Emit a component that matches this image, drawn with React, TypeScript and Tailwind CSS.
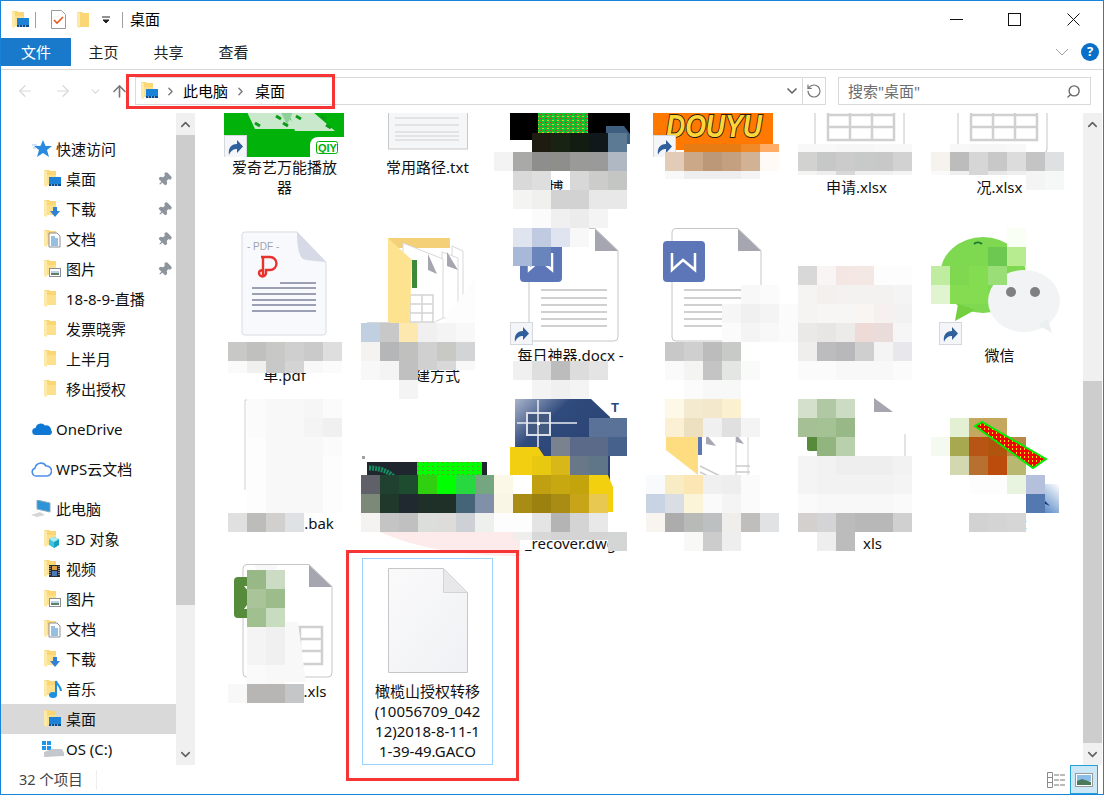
import type { ReactNode } from 'react';
import { ArrowLeft, ArrowRight, ArrowUp, ChevronDown, ChevronRight, ChevronUp, Pin, RotateCw, Search } from 'lucide-react';

type Overlay = 'desktop' | 'download' | 'doc' | 'pic' | 'cube' | 'video' | 'music' | 'none';

function SmallFolder({ overlay = 'none' }: { overlay?: Overlay }) {
  return (
    <svg width="18" height="20" viewBox="0 0 18 20" className="shrink-0">
      <path d="M0 1h5l1 1h6v14H0z" fill="#fbd675" />
      <path d="M0 1l3 1v16l-3-1z" fill="#fde9a8" />
      <path d="M3 6h9v10H3z" fill="#fde08c" />
      {overlay === 'desktop' && (
        <g>
          <rect x="5" y="8" width="12" height="9" fill="#1b82d8" />
          <rect x="5" y="15" width="12" height="2" fill="#0a4c8c" />
          <path d="M7 16h1M10 16h1M13 16h1" stroke="#fff" strokeWidth="1" />
        </g>
      )}
      {overlay === 'download' && <path d="M9 8h4v4h3l-5 6-5-6h3z" fill="#2f80d6" />}
      {overlay === 'doc' && (
        <g>
          <path d="M5 4h8l3 3v11H5z" fill="#fff" stroke="#8a8f96" />
          <path d="M7 8h4M7 10h7M7 12h7M7 14h7M7 16h7" stroke="#2f7fc4" strokeWidth="1" />
        </g>
      )}
      {overlay === 'pic' && (
        <g>
          <rect x="5.5" y="9.5" width="11" height="8" fill="#fff" stroke="#8a8f96" />
          <path d="M7 12h8v2H7z" fill="#b9d4ea" />
          <path d="M7 14h8v2H7z" fill="#5f7f62" />
        </g>
      )}
      {overlay === 'cube' && (
        <g>
          <path d="M10 8l5 2v6l-5 3-5-3v-6z" fill="#3fc4de" />
          <path d="M10 13l5-3v6l-5 3z" fill="#18a0c0" />
          <path d="M5 10l5 3 5-3-5-2z" fill="#a8ecf4" />
        </g>
      )}
      {overlay === 'video' && (
        <g>
          <rect x="5" y="6" width="11" height="12" fill="#2b2b2b" />
          <rect x="8" y="7" width="5" height="4" fill="#e0a040" />
          <rect x="8" y="12" width="5" height="5" fill="#4a78b8" />
          <path d="M6 7v10M15 7v10" stroke="#ddd" strokeWidth="1" strokeDasharray="1 1" />
        </g>
      )}
      {overlay === 'music' && (
        <g>
          <ellipse cx="9" cy="16" rx="4" ry="3" fill="#1e8ee0" />
          <path d="M12 16V2c1 4 5 5 5 10" stroke="#1e8ee0" strokeWidth="2" fill="none" />
        </g>
      )}
    </svg>
  );
}

function Shortcut({ x, y }: { x: number; y: number }) {
  return (
    <g transform={`translate(${x} ${y})`}>
      <rect x="0.5" y="0.5" width="22" height="22" fill="#f3f5f8" stroke="#d4d7dc" />
      <path d="M5 20c-1-7 2-11 8-11V5l6 6.5-6 6.5v-4c-3 0-6 1-8 6z" fill="#2f5f9c" />
    </g>
  );
}

function BaseDoc({ children }: { children?: ReactNode }) {
  return (
    <>
      <path d="M28 6.5h62l23 22V115a4 4 0 0 1-4 4H28a4 4 0 0 1-4-4V10a4 4 0 0 1 4-3.5z" fill="#fff" stroke="#c6c6c6" />
      <path d="M90 7l23 22H90z" fill="#a5a6b0" />
      {children}
    </>
  );
}

function WordIcon({ shortcut }: { shortcut?: boolean }) {
  return (
    <IconBox>
      <BaseDoc>
        <path d="M36 68h66M36 76h66M36 83h66M36 90h66M36 97h66M36 104h66" stroke="#d0d0d0" strokeWidth="2" />
        <rect x="15" y="19" width="42" height="41" rx="4" fill="#5c76b8" />
        <path d="M24 31v17l11-10 12 10V31" stroke="#fff" strokeWidth="2.5" fill="none" />
      </BaseDoc>
      {shortcut && <Shortcut x={5} y={100} />}
    </IconBox>
  );
}

function ExcelIcon({ badge }: { badge?: boolean }) {
  return (
    <IconBox>
      <BaseDoc>
        <path d="M37 69h66v37H37zM37 81h66M37 93h66M59 69v37M81 69v37" stroke="#d0d0d0" strokeWidth="2.5" fill="none" />
        {badge && (
          <g>
            <rect x="15" y="19" width="42" height="41" rx="4" fill="#558b3b" />
            <path d="M25 28l9 11-9 12h6l7-9 7 9h5l-9-12 9-11h-6l-6 8-6-8z" fill="#fff" />
          </g>
        )}
      </BaseDoc>
    </IconBox>
  );
}

function IconBox({ children }: { children: ReactNode }) {
  return (
    <svg width="131" height="123" viewBox="0 0 131 123" className="block">
      {children}
    </svg>
  );
}

function IqiyiIcon() {
  return (
    <IconBox>
      <rect x="5" y="3" width="120" height="120" fill="#00b20a" />
      <path d="M28 78h38l12 17H36z" fill="#c9e8cc" />
      <path d="M69 78h25l22 19H76z" fill="#c9e8cc" />
      <path d="M62 78h12l-6 13z" fill="#8fd09a" />
      <path d="M36 89l5 3M57 82l5 3M64 89l5 3M77 82l5 3M102 82l5 3M107 91l5 3" stroke="#0a9a14" strokeWidth="3" />
      <path d="M125 103h-26a8 8 0 0 0-8 8v12h34z" fill="#fff" />
      <rect x="97.500" y="107.500" width="21" height="12" rx="2" fill="none" stroke="#00b20a" />
      <text x="99" y="118" fontSize="11" fontWeight="700" fill="#00b20a" fontFamily="Liberation Sans">QIY</text>
      <Shortcut x={5} y={101} />
    </IconBox>
  );
}

function TxtIcon() {
  return (
    <IconBox>
      <rect x="26.5" y="40" width="79" height="75" fill="#f5f6f8" stroke="#c8c8c8" />
      <path d="M33 84h64M33 91h64M33 98h64M33 102h64M33 106h64" stroke="#cfd0d2" strokeWidth="1" />
    </IconBox>
  );
}

function NoiseIcon() {
  return (
    <IconBox>
      <defs>
        <pattern id="noise" width="5" height="4" patternUnits="userSpaceOnUse">
          <rect width="5" height="4" fill="#10c030" />
          <rect width="2" height="1" fill="#e03020" />
          <rect x="2" y="2" width="2" height="1" fill="#e8c020" />
        </pattern>
      </defs>
      <rect x="5" y="40" width="120" height="66" fill="#000" />
      <rect x="33" y="60" width="50" height="43" fill="url(#noise)" />
      <path d="M101 92h18l6 8v10h-24z" fill="#3f5f80" />
    </IconBox>
  );
}

function DouyuIcon() {
  return (
    <IconBox>
      <path d="M5 40h120v70a12 8 0 0 1-10 6H5z" fill="#ff7800" />
      <text x="18" y="103" fontSize="32" fontWeight="700" fontStyle="italic" fill="#ffd53a" stroke="#2a1e10" strokeWidth="2" fontFamily="Liberation Sans" paintOrder="stroke" textLength="96" lengthAdjust="spacingAndGlyphs">DOUYU</text>
      <Shortcut x={5} y={101} />
    </IconBox>
  );
}

function PdfIcon() {
  return (
    <IconBox>
      <path d="M26 10h52l29 30v70a3 3 0 0 1-3 3H26a3 3 0 0 1-3-3V13a3 3 0 0 1 3-3z" fill="#f8f9fc" stroke="#d8dae0" />
      <path d="M78 10c0 14 2 24 6 27 6 2 16 2 23 3z" fill="#d6d9e6" />
      <text x="28" y="28" fontSize="10" fill="#a0a4b0" fontFamily="Liberation Sans">- PDF -</text>
      <path d="M42 35h9a6.500 6.500 0 0 1 0 13h-4v3a3.500 3.500 0 0 1-7 0c0-2 2-3 5-3M44 35v20" stroke="#e8322e" strokeWidth="2.4" fill="none" />
      <path d="M61 61h36" stroke="#9ba0b4" strokeWidth="2" />
      <path d="M33 66h64M33 72h64M33 78h64M33 83h64M33 89h64" stroke="#9ba0b4" strokeWidth="2" />
    </IconBox>
  );
}

function FolderIcon({ shortcut }: { shortcut?: boolean }) {
  return (
    <IconBox>
      <path d="M26 16h62v10H26z" fill="#f4d078" />
      <path d="M90 24l11 5v61H90z" fill="#fff" stroke="#d8d8d8" />
      <path d="M80 30l16 6v60H80z" fill="#fff" stroke="#d8d8d8" />
      <path d="M85 30l11 18-11-4z" fill="#a5a6b0" />
      <path d="M41 21l40 16v59l-40 20z" fill="#fff" stroke="#d8d8d8" />
      <path d="M66 32l9 20-9-4z" fill="#a5a6b0" />
      <path d="M50 38h5v28h-5z" fill="#3e8a38" />
      <path d="M48 73h23v27H48zM48 82h23M48 91h23M60 73v27" stroke="#d4d4d4" strokeWidth="1.5" fill="none" />
      <path d="M26 16l24 22-3 77-21-15z" fill="#fde390" />
      {shortcut && <Shortcut x={5} y={100} />}
    </IconBox>
  );
}

function PaperIcon() {
  return (
    <IconBox>
      <rect x="9" y="44" width="108" height="72" fill="#fff" />
      <path d="M115 50v66H12" stroke="#a8a8a8" strokeWidth="2" fill="none" />
      <path d="M16 52h34M16 56h26M68 50h36M68 54h30" stroke="#c8b8a8" strokeWidth="1" />
    </IconBox>
  );
}

function WechatIcon() {
  return (
    <IconBox>
      <ellipse cx="49" cy="53" rx="43" ry="38" fill="#7ed850" />
      <path d="M24 82l-3 17 20-11z" fill="#72d03e" />
      <path d="M40 22a6 6 0 0 1 8 0" stroke="#1a7a30" strokeWidth="2" fill="none" />
      <ellipse cx="90" cy="79" rx="36" ry="31" fill="#f1f3f4" />
      <path d="M104 103l14 8-4-14z" fill="#ecefef" />
      <circle cx="77" cy="70" r="5" fill="#808080" />
      <circle cx="101" cy="70" r="5" fill="#808080" />
      <Shortcut x={5} y={100} />
    </IconBox>
  );
}

function PaleFileIcon() {
  return (
    <IconBox>
      <path d="M26 10h60M26 10v90M104 60v55H70" stroke="#d0d0d0" fill="none" />
    </IconBox>
  );
}

function DarkThumbIcon() {
  return (
    <IconBox>
      <defs>
        <pattern id="noise2" width="5" height="4" patternUnits="userSpaceOnUse">
          <rect width="5" height="4" fill="#00ff00" />
          <rect width="2" height="1" fill="#60a030" />
        </pattern>
      </defs>
      <rect x="5" y="72" width="120" height="46" fill="#20262e" />
      <rect x="55" y="72" width="65" height="30" fill="url(#noise2)" />
      <path d="M7 78c15 0 26 6 30 18" stroke="#129060" strokeWidth="5" strokeDasharray="2 1" fill="none" />
      <path d="M0 66h3v3H0z" fill="#a0a0a0" />
    </IconBox>
  );
}

function CadIcon() {
  return (
    <IconBox>
      <defs>
        <linearGradient id="cad" x1="0" y1="0" x2="1" y2="1">
          <stop offset="0" stopColor="#aab4cc" />
          <stop offset="0.3" stopColor="#2f4a7c" />
          <stop offset="1" stopColor="#26406e" />
        </linearGradient>
      </defs>
      <path d="M10 9h76l19 18v70H10z" fill="url(#cad)" />
      <rect x="22" y="23" width="23" height="22" fill="#44597f" stroke="#d8dde8" strokeWidth="2" />
      <path d="M12 33h60M33 10v47" stroke="#e8ebf0" strokeWidth="1.5" />
      <rect x="32" y="32" width="3" height="3" fill="#fff" />
      <text x="106" y="22" fontSize="13" fontWeight="700" fill="#1f4a80" fontFamily="Liberation Sans">T</text>
      <path d="M5 57h28l8 12h55l12 28v25H5z" fill="#f2cf10" />
      <text x="12" y="104" fontSize="20" fontWeight="700" fill="#111" fontFamily="Liberation Sans">DW</text>
    </IconBox>
  );
}

function FolderThumbIcon() {
  return (
    <IconBox>
      <path d="M49 40h55v60H49z" fill="#fff" />
      <path d="M88 42v56M100 44v52" stroke="#d0d0d0" />
      <path d="M52 76l24 12M52 82l24 12M88 76h14M88 82h14" stroke="#ccc" strokeWidth="1.5" />
      <path d="M58 44l10 12-10-2zM88 44l8 10-8-2z" fill="#a8a8b4" />
      <rect x="50" y="45" width="4" height="20" fill="#5c76b8" />
      <path d="M18 45h32v40L18 60z" fill="#fedc80" />
    </IconBox>
  );
}

function GreenExcelThumbIcon() {
  return (
    <IconBox>
      <path d="M83 8l19 14H83z" fill="#a5a6b0" />
      <path d="M114 44v30" stroke="#c8c8c8" />
      <rect x="16" y="45" width="14" height="16" rx="2" fill="#558b3b" />
    </IconBox>
  );
}

function RevitIcon() {
  return (
    <IconBox>
      <defs>
        <linearGradient id="rvt" x1="1" y1="0" x2="0" y2="1">
          <stop offset="0" stopColor="#ffffff" />
          <stop offset="1" stopColor="#1b5cb0" />
        </linearGradient>
      </defs>
      <rect x="92" y="94" width="33" height="29" fill="url(#rvt)" />
      <path d="M104 98l4 2v8l8 8-9-4-8 6 5-10z" fill="#12337c" />
    </IconBox>
  );
}

function GenericIcon() {
  return (
    <IconBox>
      <defs>
        <linearGradient id="gdoc" x1="0" y1="0" x2="1" y2="1">
          <stop offset="0" stopColor="#fafafb" />
          <stop offset="1" stopColor="#f0f1f4" />
        </linearGradient>
      </defs>
      <path d="M26.500 10.500h55l24 24v80h-79z" fill="url(#gdoc)" stroke="#c6c6c6" />
      <path d="M81.500 10.500l24 24h-24z" fill="#e8e8ea" stroke="#d4d4d4" />
    </IconBox>
  );
}

type Tile = { icon: ReactNode; lines: ReactNode[]; selected?: boolean };

const gap = (cls: string) => <span className={`inline-block ${cls}`} />;

const tiles: Tile[] = [
  { icon: <IqiyiIcon />, lines: ['爱奇艺万能播放', '器'] },
  { icon: <TxtIcon />, lines: ['常用路径.txt'] },
  { icon: <NoiseIcon />, lines: ['', <span className="mr-[29px]">博</span>, ''] },
  { icon: <DouyuIcon />, lines: [''] },
  { icon: <ExcelIcon />, lines: ['', '申请.xlsx'] },
  { icon: <ExcelIcon />, lines: ['', '况.xlsx'] },

  { icon: <PdfIcon />, lines: ['', '单.pdf'] },
  { icon: <FolderIcon shortcut />, lines: ['', <>{gap('w-[20px]')}建方式</>] },
  { icon: <WordIcon shortcut />, lines: ['每日神器.docx -', ''] },
  { icon: <WordIcon />, lines: [''] },
  { icon: <PaperIcon />, lines: [''] },
  { icon: <WechatIcon />, lines: ['微信'] },

  { icon: <PaleFileIcon />, lines: [<>{gap('w-[69px]')}.bak</>] },
  { icon: <DarkThumbIcon />, lines: [''] },
  { icon: <CadIcon />, lines: ['', '_recover.dwg'] },
  { icon: <FolderThumbIcon />, lines: [''] },
  { icon: <GreenExcelThumbIcon />, lines: ['', <>{gap('w-[32px]')}xls</>] },
  { icon: <RevitIcon />, lines: [<>{gap('w-[41px]')}vt</>] },

  { icon: <ExcelIcon badge />, lines: [<>{gap('w-[61px]')}.xls</>] },
  { icon: <GenericIcon />, lines: ['橄榄山授权转移', '(10056709_042', '12)2018-8-11-1', '1-39-49.GACO'], selected: true },
];

// mosaic cells that sit over the file icons: [row, first column, colours, height]
const mosaic: [number, number, string, number?][] = [
  [0, 16, '1e1c10 1a2214 121c10 10181c 5c7a94'],
  [1, 14, 'f3f3f3 a9a9a7 8e8e8c 8e8e8a 9a9a98 9a9a9a b0b8c4'],
  [2, 15, 'd9d9d9 dedede - d8d8d8 ccccca c4c6c4'],
  [3, 15, 'f4f4f2 f0f0ee d2d2d2 d2d2d2 e8e8e8 e8e8e8'],
  [4, 16, 'fbfbfb f0f0f0 ececec f4f4f4'],
  [0.58, 24, 'e87c14 e87c14 e87c14 f08a28 ffac66', 8],
  [1, 23, 'e2ccb8 cba888 bd9878 c4a080 d2b294 fffaf5'],
  [2, 23, 'f8f8f8 eeeeee eeeeee eeeeee f4f4f4', 8],
  [0.58, 30, 'f8f8f8 f8f8f8 f6f6f6 f6f6f6 f8f8f8 f8f8f8', 8],
  [1, 30, 'd2d2d0 c6c8c8 cbcbcb c8caca c8c8c8 d2d2d2'],
  [2, 30, 'f4f4f4 eeeeee d8d8d8 f0f0f0 f0f0f0 f4f4f4', 4],
  [0.58, 38, 'f8f8f8 f6f6f6 f6f6f6 f8f8f8', 8],
  [1, 37, 'f6f2ee bcbcbc d6d6d6 c8c8c8 dcdcdc c4c4c4 dfe0e2'],
  [2, 37, 'fafafa efefef d6d6d6 e8e8e8 eeeeee', 4],
  [2, 42, 'f4f4f4 f6f8f8'],

  [5, 15, 'e0e4ee c0cae0 e0e4f0 f8f8f8'],
  [6, 15, 'a8b8d8 6a84bc'],
  [8, 27, 'f8f8f8 fbfbfb'],
  [9, 26, 'f6f6f6 f0f0f0 f4f4f4 fbfbfb'],
  [10, 26, 'fbfbfb f4f4f4 f8f8f8 fbfbfb'],
  [7, 30, 'd8d8d8 f8f5f4 f4e6e2 f4e8e4 fdfdfd fdfdfd'],
  [8, 30, 'f6f4f2 f4f0ee f4f2f0 f4f2f0 f4f2f0 f4f4f4'],
  [9, 30, 'f6f4f2 f8f6f4 f8f6f4 f8f5f2 f6f0ee f2f2f2'],
  [10, 30, 'ebe9e7 e8e6e4 ecebea eedad6 eadcda f6f6f6'],
  [11, 30, 'f0eeec bcbcbe b8b8ba cfcfcf f4f4f4 e8e8ec'],
  [12, 30, 'fbfbfb fbfbfb f8f8f8 f8f8f8 f8f8f8 fbfbfb'],
  [5, 41, 'fafff5'],
  [6, 40, '6cc850 b8ec90'],
  [7, 37, 'c0eca0 80d850 84dc50 9ade78'],
  [8, 37, 'e0f4d0 86dc50 84dc50'],
  [11, 0, 'c8c8c6 c0c0be c8c8c4 cfcfcf cacaca dedede'],
  [12, 0, 'fafafa f0f0ee c8c8c8 d4d4d4 f8f8f8 fbfbfb', 12],
  [10, 7, 'c0d0e0 c8c8c8 fde8b0 f0f0f0 f4f4f4 f8f8f8'],
  [11, 7, 'f4f3f2 b4b6b8 c0c0be d0d0d0 c8c8c4 d2d4d6'],
  [12, 7, 'f8f8f8 f4f4f4 c0c0c0'],
  [12, 10, 'd0d0d0 d8d8d8 f8f8f8', 9],
  [13, 9, 'f4f4f4'],
  [12, 15, 'f0f0f0 dedede bcbcbc dcdcdc e4e4e4'],
  [13, 16, 'f4f4f4 f0f0f0 f4f4f4'],
  [11, 23, 'c8c8c8 cfcfcf bcbcbc c8cac8'],
  [12, 23, 'fafafa f4f4f2 c4c4c4 e4e6e4 fafafa'],
  [13, 24, 'fbfbfb f8f8f8 f8f8f8'],

  [14, 1, 'fbfbfb f8f8f8 f8f8f8 f6f6f6 fbfbfb'],
  [15, 1, 'fbfbfb f8f8f8 f8f8f8 f4f4f4 f0f0f0'],
  [16, 1, 'fdfdfd f8f8f8 f8f8f8 f8f8f8 fbfbfb'],
  [17, 1, 'fdfdfd f8f8f8 f8f8f8 f8f8f8 fdfdfd'],
  [18, 1, 'fdfdfd f8f8f8 f8f8f8 f8f8f8 fdfdfd'],
  [19, 1, 'fdfdfd f8f8f8 f8f8f8 f8f8f8 fdfdfd'],
  [20, 0, 'e0e0e0 bcbcba d2d0ce dee2e4'],
  [15, 19, '5a7298 5a7298'],
  [16, 17, '7a8290 5a6a88 5a6a88 46628c'],
  [17, 16, 'e8c810 d8b818 687888 5f7688'],
  [18, 7, '606068 204030 1e4c2e 30d010 00ff00 28d840 74a680 fbf8e8 fffffe c0a010 c8a810 c4a40c f2d010'],
  [19, 7, '7c8878 20382c 202830 1f3028 1f3029 456478 8090a8 faf6e6 a88c14 9c8010 a88c14 c8a418 e8c850'],
  [20, 7, 'f4f3f2 c4c4c4 c0c0c0 dcdedc dedcd8 cdd0d4 eef0ee fdfdfd fdfdfd e4e4e4 b4b4b4 d4d4d4 e8e8e8'],
  [21, 15, 'f0eeec d8d8d8 d4d4d4 d4d4d4 d4d4d4', 8],
  [21, 20, 'd4d6d6'],
  [14, 23, 'fef8e8 f4ead0 f4e8cc fbf0d0'],
  [15, 23, 'fcf0d4 ece0c0 f0f0f0 e0e0e0 f4f4f4'],
  [18, 22, 'f8fafc f8ecc4 fbe6b4 f0f0f0 eeeeee fbfbfb'],
  [19, 22, 'c8d4e4 d8dee4 fcf4d8 fafafa f4f4f4 fbfbfb'],
  [20, 22, 'f8f4f0 acacac b8bab8 bcc0c0 f0eeea c0bebc e0e2e4'],
  [21, 24, 'f8f8f6 cccccc eeeeee'],
  [14, 30, 'd4e0cc b0c8a4 ccdcc4'],
  [15, 30, 'a4c094 a4c294 98b888'],
  [16, 31, '92b47e b8d0ac'],
  [17, 30, 'f4f4f4 f2f2f2 eeeeee eeeeee eeeeee f2f2f2'],
  [18, 30, 'f4f4f4 f2f2f2 f2f2f2 f2f2f2 f2f2f2 f4f4f4'],
  [19, 30, 'fafafa f8f8f8 f8f8f8 f8f8f8 f8f8f8 fafafa'],
  [20, 30, 'd4d0ce d4d4d6 bcbcbc b8b8b8 b8b8b8 d0d0d0'],
  [21, 31, 'eeeeee bcbcbc'],
  [15, 38, 'e4f0d4 c4a860 c4a860'],
  [16, 37, 'f4faf0 a8a850 b85414 b0540e b88848'],
  [17, 38, 'd4d8b0 b87030 bc4c0c b8b870'],
  [18, 39, 'fdfdfd fdfdfd e8f4e0 b4c0dc'],
  [19, 42, '5478b0'],
  [20, 39, 'd2d2d2 d4d4d4 d6d6d6'],

  [23, 1, '98b888 ccdcc4'],
  [24, 1, 'a8c498 9cbc8c'],
  [25, 1, 'a0c090 c8dcc0'],
  [26, 1, 'f4f4f4 f0f0f0'],
  [27, 1, 'f4f4f4 f0f0f0'],
  [28, 1, 'fafafa f8f8f8'],
  [29, 0, 'f8f8f8 b8b6b4 b8b6b4 c4c6c8'],
];

function MosaicLayer() {
  return (
    <svg
      width="888"
      height="652"
      viewBox="195 113 888 652"
      shapeRendering="crispEdges"
      className="absolute left-0 top-0 pointer-events-none"
    >
      <defs>
        <pattern id="band" width="4" height="4" patternUnits="userSpaceOnUse">
          <rect width="4" height="4" fill="#f00000" />
          <rect width="1" height="2" fill="#ffe000" />
        </pattern>
      </defs>
      <path d="M475 278v67h-49z" fill="#fdfdfd" shapeRendering="auto" />
      <path d="M380 532c40 18 90 24 140 24v-24z" fill="#fdeaea" shapeRendering="auto" />
      <path d="M255 565h22l-4 20H258zM255 622l-9 60h60l-8-60z" fill="#f8f8f8" shapeRendering="auto" />
      {mosaic.flatMap(([row, col, colors, h]) =>
        colors.split(' ').map((c, i) =>
          c === '-' ? null : (
            <rect key={`${row}-${col}-${i}`} x={228 + 19 * (col + i)} y={133 + 19 * row} width="19" height={h ?? 19} fill={`#${c}`} />
          ),
        ),
      )}
      <path d="M975 426l7-4 64 37-13 9z" fill="url(#band)" stroke="#00f000" strokeWidth="2" shapeRendering="auto" />
    </svg>
  );
}

function NavRow({ icon, label, pin, depth = 1, active }: { icon: ReactNode; label: string; pin?: boolean; depth?: 0 | 1; active?: boolean }) {
  return (
    <div className={`h-[30px] flex items-center shrink-0 ${depth === 1 ? 'pl-[43px]' : 'pl-[31px]'} ${active ? 'bg-[#d9d9d9]' : ''}`}>
      <span className={`flex shrink-0 ${depth === 1 ? 'w-[22px]' : 'w-[24px]'}`}>{icon}</span>
      <span className="text-[15px] text-[#111] whitespace-nowrap">{label}</span>
      {pin && <Pin size={15} fill="#8d949c" stroke="#8d949c" className="ml-auto mr-[4px] rotate-45" />}
    </div>
  );
}

function Sidebar() {
  return (
    <div className="w-[175px] shrink-0 pt-[21px] flex flex-col overflow-hidden">
      <NavRow
        depth={0}
        label="快速访问"
        icon={
          <svg width="20" height="18" viewBox="0 0 20 18">
            <path d="M11 0l2.600 6H20l-5 4 2 7-6-4-6 4 2-7-5-4h6.400z" fill="#2a8ae0" />
            <path d="M0 5h5M1 8h3" stroke="#9cc8ee" strokeWidth="1" />
          </svg>
        }
      />
      <NavRow pin label="桌面" icon={<SmallFolder overlay="desktop" />} />
      <NavRow pin label="下载" icon={<SmallFolder overlay="download" />} />
      <NavRow pin label="文档" icon={<SmallFolder overlay="doc" />} />
      <NavRow pin label="图片" icon={<SmallFolder overlay="pic" />} />
      <NavRow label="18-8-9-直播" icon={<SmallFolder />} />
      <NavRow label="发票晓霁" icon={<SmallFolder />} />
      <NavRow label="上半月" icon={<SmallFolder />} />
      <NavRow label="移出授权" icon={<SmallFolder />} />
      <div className="h-[10px] shrink-0" />
      <NavRow
        depth={0}
        label="OneDrive"
        icon={
          <svg width="20" height="14" viewBox="0 0 20 14">
            <path d="M4 13a3.500 3.500 0 0 1-.5-7A5.500 5.500 0 0 1 13 3.500 4.500 4.500 0 0 1 19 8a3 3 0 0 1-1 5z" fill="#0f78d4" />
          </svg>
        }
      />
      <div className="h-[10px] shrink-0" />
      <NavRow
        depth={0}
        label="WPS云文档"
        icon={
          <svg width="21" height="16" viewBox="0 0 21 16" className="-ml-[1px]">
            <path d="M5 15a4 4 0 0 1-1-7.800A6 6 0 0 1 15 5a5 5 0 0 1 1 10z" fill="none" stroke="#4a90e8" strokeWidth="1.6" />
          </svg>
        }
      />
      <div className="h-[10px] shrink-0" />
      <NavRow
        depth={0}
        label="此电脑"
        icon={
          <svg width="20" height="18" viewBox="0 0 20 18" className="-ml-[1px]">
            <path d="M6 0l13 3v9L6 9z" fill="#2e93d8" stroke="#8fa8b8" />
            <path d="M0 15l9-3 5 3-8 2z" fill="#d4d6d8" />
          </svg>
        }
      />
      <NavRow label="3D 对象" icon={<SmallFolder overlay="cube" />} />
      <NavRow label="视频" icon={<SmallFolder overlay="video" />} />
      <NavRow label="图片" icon={<SmallFolder overlay="pic" />} />
      <NavRow label="文档" icon={<SmallFolder overlay="doc" />} />
      <NavRow label="下载" icon={<SmallFolder overlay="download" />} />
      <NavRow label="音乐" icon={<SmallFolder overlay="music" />} />
      <NavRow active label="桌面" icon={<SmallFolder overlay="desktop" />} />
      <div className="h-[30px] flex items-center shrink-0 pl-[40px]">
        <svg width="25" height="18" viewBox="0 0 25 18" className="shrink-0">
          <path d="M1 1h4v4H1zM6 1h4v4H6zM1 6h4v4H1zM6 6h4v4H6z" fill="#1c96e8" />
          <path d="M3 12l8-3h10l2 4v3l-20 1z" fill="#c4c8cc" />
        </svg>
        <span className="text-[15px] text-[#111] whitespace-nowrap">OS (C:)</span>
      </div>
    </div>
  );
}

function Scrollbar({ thumbClass, spacerClass }: { thumbClass: string; spacerClass: string }) {
  return (
    <div className="w-[19px] shrink-0 bg-[#f0f0f0] flex flex-col">
      <div className="h-[22px] shrink-0 flex items-center justify-center">
        <ChevronUp size={15} strokeWidth={2.5} className="text-[#606060]" />
      </div>
      <div className={spacerClass} />
      <div className={`bg-[#cdcdcd] ${thumbClass}`} />
      <div className="flex-1" />
      <div className="h-[22px] shrink-0 flex items-center justify-center">
        <ChevronDown size={15} strokeWidth={2.5} className="text-[#606060]" />
      </div>
    </div>
  );
}

export default function App() {
  return (
    <div className="relative w-[1104px] h-[795px] overflow-hidden bg-white border border-[#1883d7] flex flex-col font-['Noto_Sans','Noto_Sans_CJK_SC',sans-serif] text-black">
      {/* title bar */}
      <div className="h-[37px] shrink-0 flex items-center pl-[11px]">
        <SmallFolder overlay="desktop" />
        <div className="w-px h-[16px] bg-[#a0a0a0] ml-[5px] mr-[15px]" />
        <svg width="15" height="19" viewBox="0 0 15 19" className="shrink-0">
          <path d="M.5.5h10l4 4v14H.5z" fill="#fff" stroke="#9a9a9a" />
          <path d="M3 10l3 3 6-6" stroke="#e8561e" strokeWidth="1.600" fill="none" />
        </svg>
        <div className="ml-[11px] w-[13px] flex">
          <svg width="13" height="18" viewBox="0 0 13 18">
            <path d="M0 1h5l1 1h6v14H0z" fill="#fbd675" />
            <path d="M0 1l3 1v15l-3-1z" fill="#fde9a8" />
          </svg>
        </div>
        <svg width="10" height="8" viewBox="0 0 10 8" className="ml-[11px]">
          <path d="M1 1h8M2 4h6l-3 3z" stroke="#222" strokeWidth="1" fill="#222" />
        </svg>
        <div className="w-px h-[16px] bg-[#a0a0a0] ml-[11px] mr-[7px]" />
        <span className="text-[15px] leading-none">桌面</span>
        <div className="ml-auto flex items-center">
          <svg width="13" height="13" viewBox="0 0 13 13"><path d="M0 6.500h13" stroke="#111" /></svg>
          <svg width="13" height="13" viewBox="0 0 13 13" className="ml-[45px]"><rect x=".5" y=".5" width="12" height="12" fill="none" stroke="#111" /></svg>
          <svg width="13" height="13" viewBox="0 0 13 13" className="ml-[46px] mr-[23px]"><path d="M.5.5l12 12M12.500.5l-12 12" stroke="#111" /></svg>
        </div>
      </div>

      {/* ribbon tabs */}
      <div className="h-[32px] shrink-0 flex items-start border-b border-[#d9d9d9] text-[15px]">
        <div className="w-[70px] h-[28px] bg-[#1979ca] text-white flex items-center justify-center">文件</div>
        <div className="w-[65px] h-[28px] flex items-center justify-center text-[#222]">主页</div>
        <div className="w-[65px] h-[28px] flex items-center justify-center text-[#222]">共享</div>
        <div className="w-[65px] h-[28px] flex items-center justify-center text-[#222]">查看</div>
        <div className="ml-auto h-[28px] flex items-center pr-[4px]">
          <svg width="14" height="8" viewBox="0 0 14 8"><path d="M1 1l6 6 6-6" stroke="#a0a0a0" fill="none" /></svg>
          <div className="ml-[12px] w-[18px] h-[18px] rounded-full bg-[#0a6fc8] text-white text-[13px] font-bold flex items-center justify-center">?</div>
        </div>
      </div>

      {/* address row */}
      <div className="h-[43px] shrink-0 flex items-start pt-[7px] pl-[15px] pr-[12px]">
        <div className="h-[28px] flex items-center text-[#d8d8d8]">
          <ArrowLeft size={18} strokeWidth={1.600} />
          <ArrowRight size={18} strokeWidth={1.600} className="ml-[20px]" />
          <ChevronDown size={13} strokeWidth={2} className="ml-[17px]" />
          <ArrowUp size={19} strokeWidth={2} className="ml-[8px] text-[#777]" />
        </div>
        <div className="ml-[6px] w-[691px] h-[28px] border border-[#d9d9d9] flex items-center pl-[5px] text-[15px]">
          <SmallFolder overlay="desktop" />
          <ChevronRight size={13} strokeWidth={2.500} className="ml-[5px] text-[#777]" />
          <span className="ml-[6px]">此电脑</span>
          <ChevronRight size={13} strokeWidth={2.500} className="ml-[6px] text-[#777]" />
          <span className="ml-[8px]">桌面</span>
          <div className="ml-auto h-full flex items-center">
            <ChevronDown size={16} strokeWidth={2.500} className="mr-[2px] text-[#666]" />
            <div className="w-px h-full bg-[#d9d9d9]" />
            <RotateCw size={16} strokeWidth={1.800} className="mx-[3px] -scale-x-100 text-[#777]" />
          </div>
        </div>
        <div className="ml-[12px] w-[253px] h-[28px] border border-[#d9d9d9] flex items-center pl-[9px] pr-[9px] text-[15px] text-[#6d6d6d]">
          <span>搜索"桌面"</span>
          <Search size={15} strokeWidth={2.200} className="ml-auto -scale-x-100 text-[#666]" />
        </div>
      </div>

      {/* body */}
      <div className="flex-1 min-h-0 flex pr-px">
        <Sidebar />
        <Scrollbar spacerClass="" thumbClass="h-[470px]" />
        <div className="relative flex-1 min-w-0 overflow-hidden">
          <div className="-mt-[79px] pl-[24px] grid grid-cols-[repeat(6,131px)] gap-x-[12px] gap-y-px items-start">
            {tiles.map((t, i) => (
              <div key={i} className={`flex flex-col items-center text-[15px] leading-5 text-[#111] text-center pb-[4px] ${t.selected ? 'outline outline-1 -outline-offset-1 outline-[#99d1ff]' : ''}`}>
                {t.icon}
                {t.lines.map((l, j) => (
                  <div key={j} className="h-5 whitespace-nowrap">{l}</div>
                ))}
              </div>
            ))}
          </div>
          <MosaicLayer />
        </div>
        <Scrollbar spacerClass="h-[246px] shrink-0" thumbClass="h-[362px]" />
      </div>

      {/* status bar */}
      <div className="h-[29px] shrink-0 flex items-center pl-[18px] text-[14.500px] text-[#444]">
        <span>32 个项目</span>
        <div className="ml-[13px] w-px h-[20px] bg-[#eeeeee]" />
        <div className="ml-auto flex items-center pr-[5px]">
          <svg width="18" height="16" viewBox="0 0 18 16">
            <path d="M.5.5h5v15h-5zM.5 5.500h5M.5 10.500h5" fill="#fff" stroke="#8a8a8a" />
            <path d="M7 3h5M13 3h5M7 8h5M13 8h5M7 13h5M13 13h5" stroke="#777" />
          </svg>
          <div className="ml-[5px] w-[28px] h-[29px] bg-[#cce8f6] border border-[#26a0da] flex items-center justify-center">
            <svg width="18" height="14" viewBox="0 0 18 14">
              <rect x=".5" y=".5" width="17" height="13" fill="#fff" stroke="#9a9a9a" />
              <path d="M2 2h14v6H2z" fill="#8abde8" />
              <path d="M2 8l5-2 9 3v3H2z" fill="#4a7a5a" />
            </svg>
          </div>
        </div>
      </div>

      {/* red annotations */}
      <div className="absolute left-[125px] top-[73px] w-[209px] h-[35px] border-[3px] border-[#f73535]" />
      <div className="absolute left-[345px] top-[549px] w-[173px] h-[231px] border-[3px] border-[#f73535]" />
    </div>
  );
}
